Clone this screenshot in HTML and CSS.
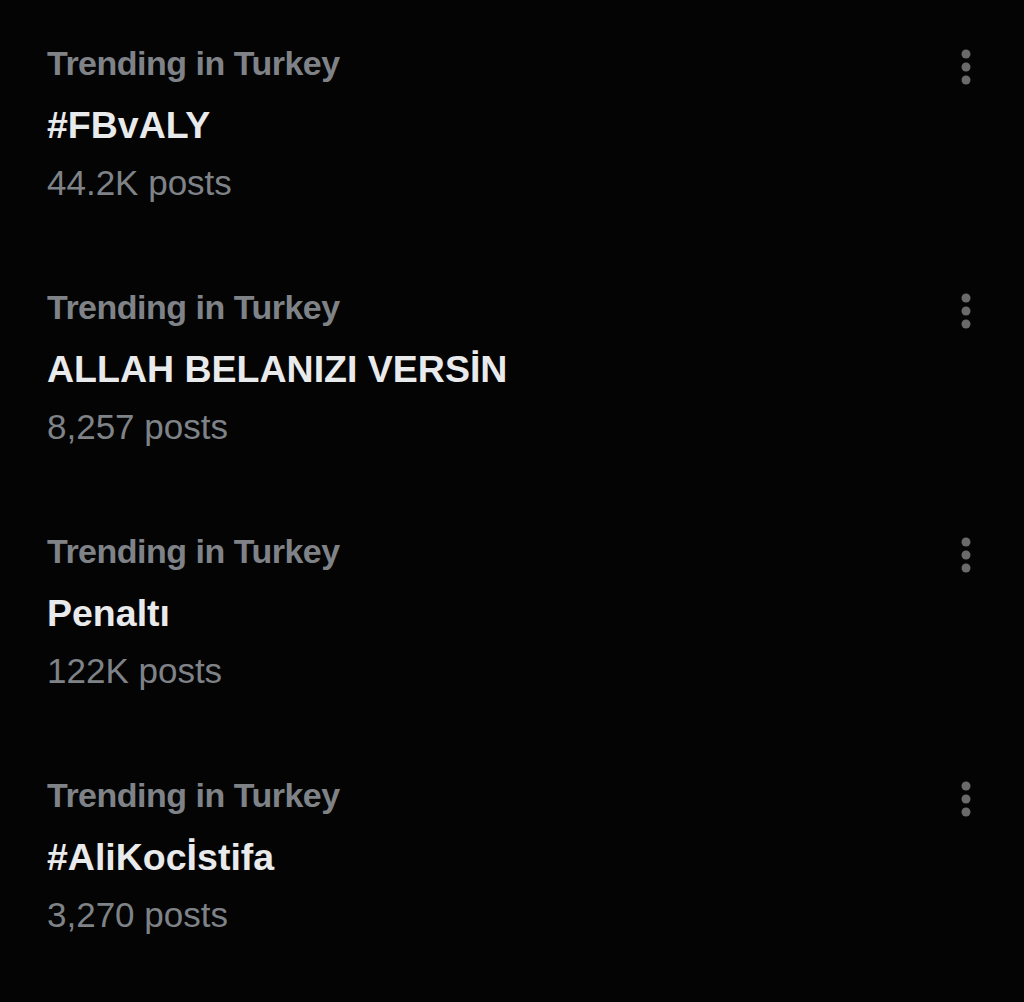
FILE: index.html
```html
<!DOCTYPE html>
<html lang="tr">
<head>
  <meta charset="UTF-8" />
  <meta name="viewport" content="width=device-width, initial-scale=1.0"/>
  <title>Trending</title>
  <link rel="stylesheet" href="styles.css">
</head>
<body>

  <div class="trends">

    <div class="trend">
      <div class="trend-body">
        <div class="trend-meta">Trending in Turkey</div>
        <div class="trend-name">#FBvALY</div>
        <div class="trend-count">44.2K posts</div>
      </div>
      <button class="more" aria-label="More">
        <svg width="10" height="36" viewBox="0 0 10 36"><circle cx="5" cy="5" r="4.5"/><circle cx="5" cy="18" r="4.5"/><circle cx="5" cy="31" r="4.5"/></svg>
      </button>
    </div>

    <div class="trend">
      <div class="trend-body">
        <div class="trend-meta">Trending in Turkey</div>
        <div class="trend-name">ALLAH BELANIZI VERSİN</div>
        <div class="trend-count">8,257 posts</div>
      </div>
      <button class="more" aria-label="More">
        <svg width="10" height="36" viewBox="0 0 10 36"><circle cx="5" cy="5" r="4.5"/><circle cx="5" cy="18" r="4.5"/><circle cx="5" cy="31" r="4.5"/></svg>
      </button>
    </div>

    <div class="trend">
      <div class="trend-body">
        <div class="trend-meta">Trending in Turkey</div>
        <div class="trend-name">Penaltı</div>
        <div class="trend-count">122K posts</div>
      </div>
      <button class="more" aria-label="More">
        <svg width="10" height="36" viewBox="0 0 10 36"><circle cx="5" cy="5" r="4.5"/><circle cx="5" cy="18" r="4.5"/><circle cx="5" cy="31" r="4.5"/></svg>
      </button>
    </div>

    <div class="trend">
      <div class="trend-body">
        <div class="trend-meta">Trending in Turkey</div>
        <div class="trend-name">#AliKocİstifa</div>
        <div class="trend-count">3,270 posts</div>
      </div>
      <button class="more" aria-label="More">
        <svg width="10" height="36" viewBox="0 0 10 36"><circle cx="5" cy="5" r="4.5"/><circle cx="5" cy="18" r="4.5"/><circle cx="5" cy="31" r="4.5"/></svg>
      </button>
    </div>

  </div>

</body>
</html>
```

FILE: styles.css
```css
body {
  margin: 0;
  background: #040404;
  font-family: "Liberation Sans", Arial, sans-serif;
  min-height: 1002px;
}

.trends {
  padding: 33px 53px 0 47px;
}

.trend {
  display: flex;
  justify-content: space-between;
  align-items: flex-start;
  height: 244px;
}

.trend-meta {
  color: #7f8388;
  font-size: 34px;
  font-weight: bold;
  letter-spacing: -0.5px;
  line-height: 60px;
}

.trend-name {
  color: #e9eaeb;
  font-size: 37.5px;
  font-weight: bold;
  line-height: 60px;
  margin-top: 2px;
}

.trend-count {
  color: #7f8388;
  font-size: 35px;
  line-height: 56px;
}

.more {
  background: none;
  border: none;
  padding: 0;
  margin-top: 16px;
  fill: #6a6a6a;
  cursor: pointer;
}

.more svg {
  display: block;
}
```
